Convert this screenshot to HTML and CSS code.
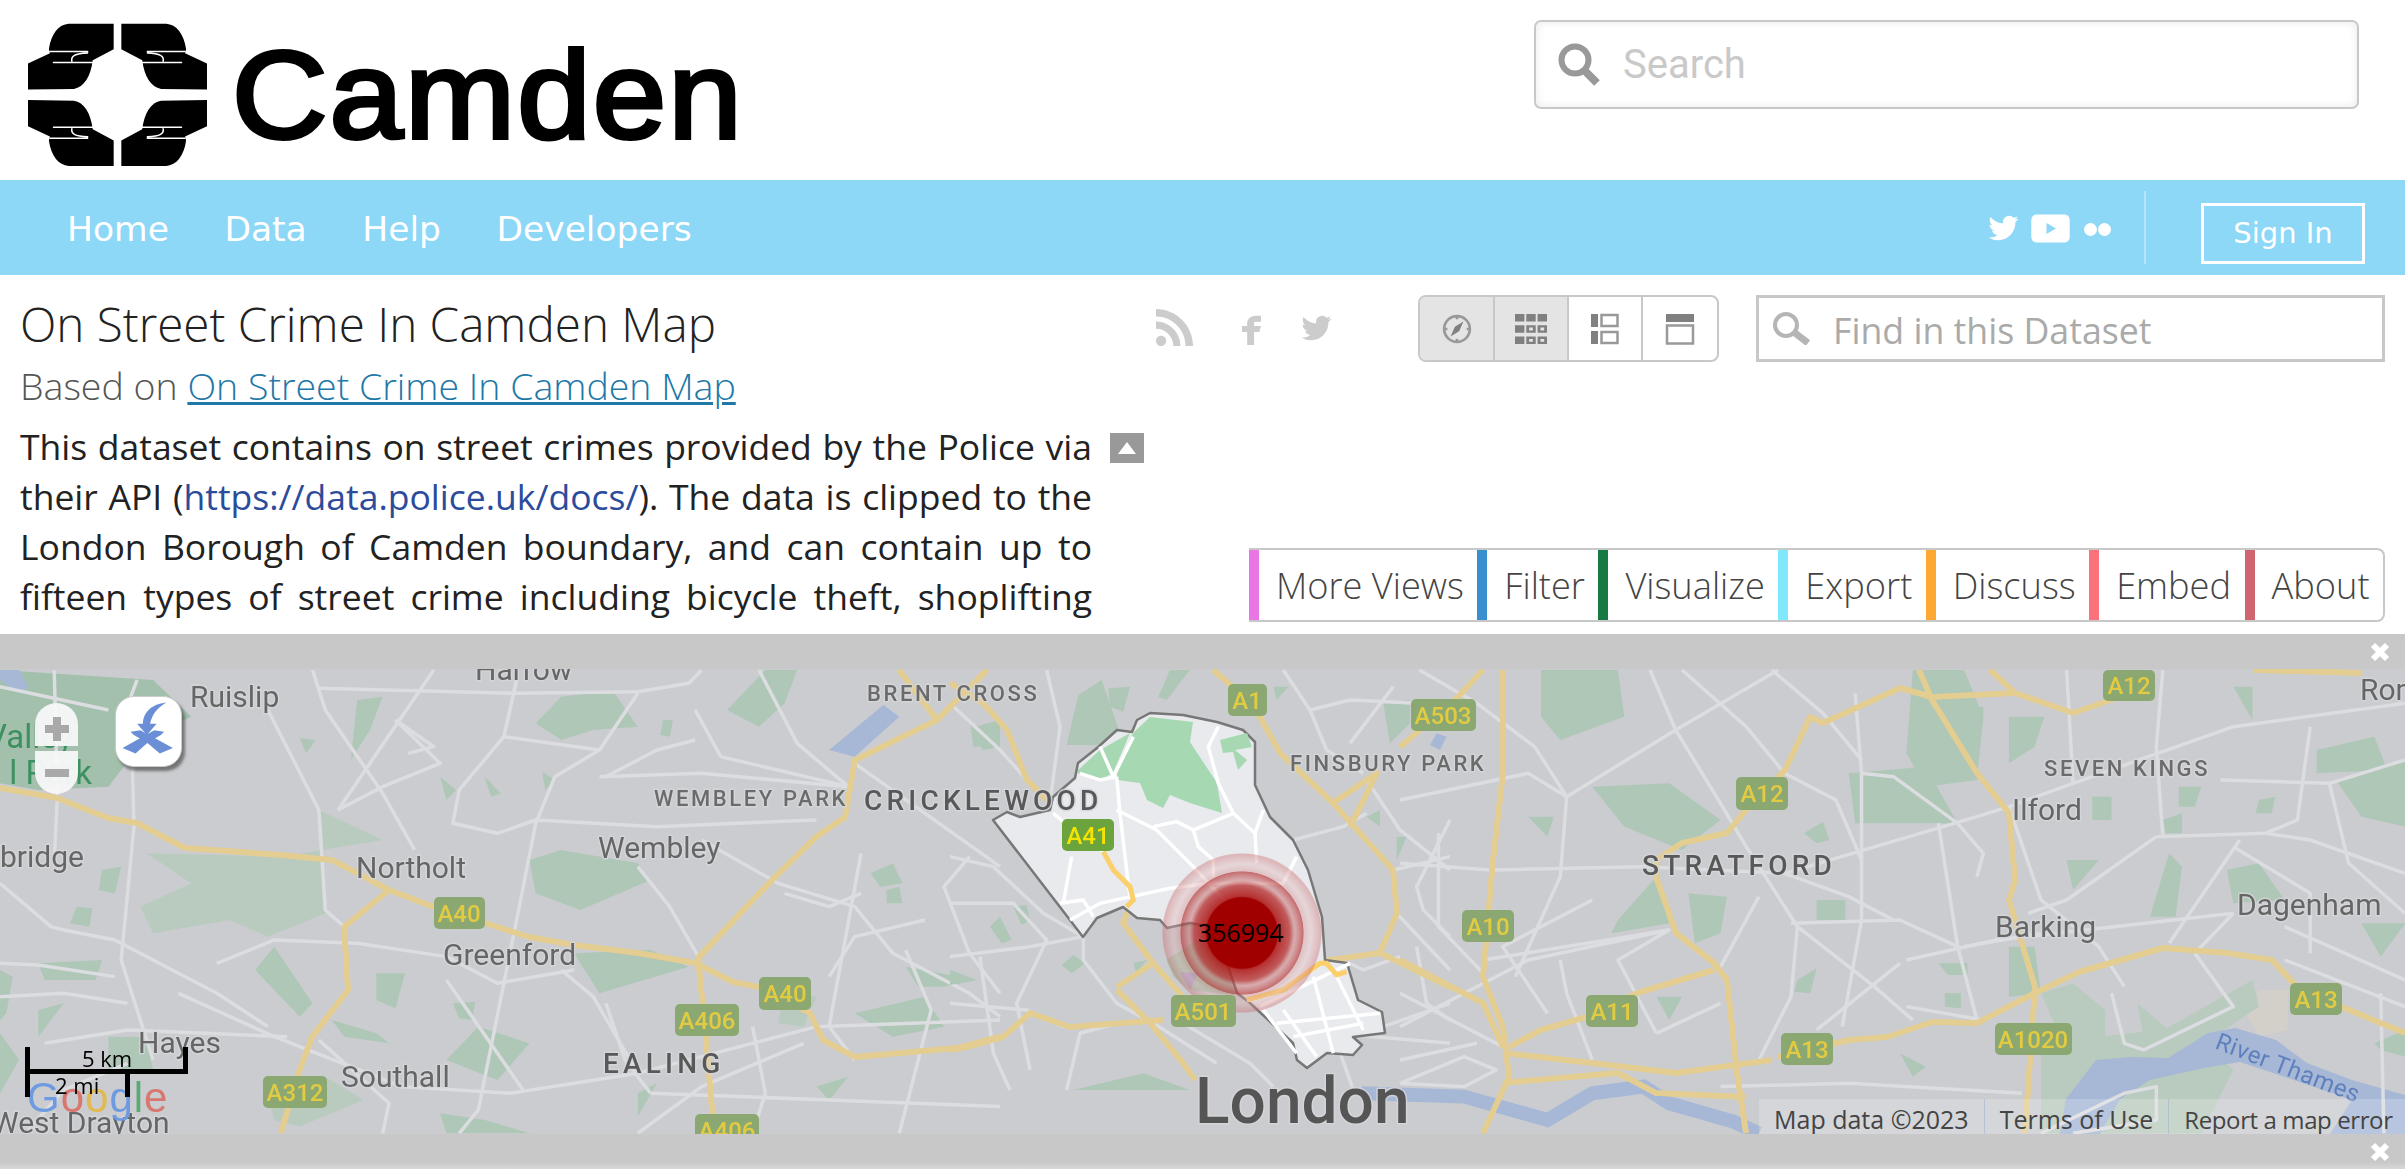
FILE: index.html
```html
<!DOCTYPE html>
<html lang="en">
<head>
<meta charset="utf-8">
<title>On Street Crime In Camden Map</title>
<link rel="stylesheet" href="styles.css">
</head>
<body>
<header class="site-header">
  <a class="logo" href="#">
    <svg class="emblem" viewBox="55 68 351 421" preserveAspectRatio="none" aria-hidden="true">
      <defs>
        <g id="hand">
          <path class="hand-fill" d="M96,145 C100,100 115,72 135,70 L223,70 L223,145 L182,178 C178,225 165,258 145,262 L55,264 L55,187 L98,157 Z"/>
          <path class="hand-line" d="M98,152 H172 M105,184 H183 M141,180 C139,166 146,157 172,156"/>
        </g>
      </defs>
      <use href="#hand"/>
      <use href="#hand" transform="translate(461 0) scale(-1 1)"/>
      <use href="#hand" transform="translate(0 559) scale(1 -1)"/>
      <use href="#hand" transform="translate(461 559) scale(-1 -1)"/>
    </svg>
    <span class="logo-text">Camden</span>
  </a>
  <div class="site-search">
    <svg class="site-search-icon" viewBox="0 0 45 43" aria-hidden="true"><circle cx="18" cy="17" r="13.5"/><path d="M28 28 L40 40"/></svg>
    <span class="site-search-text">Search</span>
  </div>
</header>

<nav class="site-nav">
  <div class="nav-links">
    <a href="#">Home</a><a href="#">Data</a><a href="#">Help</a><a href="#">Developers</a>
  </div>
  <div class="nav-right">
    <svg class="nav-twitter" viewBox="0 0 24 24" aria-hidden="true"><path d="M23.953 4.57a10 10 0 01-2.825.775 4.958 4.958 0 002.163-2.723c-.951.555-2.005.959-3.127 1.184a4.92 4.92 0 00-8.384 4.482C7.69 8.095 4.067 6.13 1.64 3.162a4.822 4.822 0 00-.666 2.475c0 1.71.87 3.213 2.188 4.096a4.904 4.904 0 01-2.228-.616v.06a4.923 4.923 0 003.946 4.827 4.996 4.996 0 01-2.212.085 4.936 4.936 0 004.604 3.417 9.867 9.867 0 01-6.102 2.105c-.39 0-.779-.023-1.17-.067a13.995 13.995 0 007.557 2.209c9.053 0 13.998-7.496 13.998-13.985 0-.21 0-.42-.015-.63A9.935 9.935 0 0024 4.59z"/></svg>
    <svg class="nav-youtube" viewBox="0 0 39 29" aria-hidden="true"><path fill-rule="evenodd" d="M6 0.5 H33 C37 0.5 38.5 3 38.7 6 V23 C38.5 26 37 28.5 33 28.5 H6 C2 28.5 0.5 26 0.3 23 V6 C0.5 3 2 0.5 6 0.5 Z M15.5 9 V20 L25 14.5 Z"/></svg>
    <svg class="nav-flickr" viewBox="0 0 27 13" aria-hidden="true"><circle cx="6.5" cy="6.5" r="6.5"/><circle cx="20.5" cy="6.5" r="6.5"/></svg>
    <span class="nav-divider"></span>
    <a class="sign-in" href="#">Sign In</a>
  </div>
</nav>

<section class="dataset">
  <div class="dataset-info">
    <h1 class="dataset-title">On Street Crime In Camden Map</h1>
    <p class="based-on">Based on <a href="#">On Street Crime In Camden Map</a></p>
    <div class="desc-row">
      <p class="desc">This dataset contains on street crimes provided by the Police via their API (<a href="#">https://data.police.uk/docs/</a>). The data is clipped to the London Borough of Camden boundary, and can contain up to fifteen types of street crime including bicycle theft, shoplifting and other theft, burglary, robbery and vehicle crime.</p>
      <button class="desc-toggle" aria-label="Collapse"><span class="tri"></span></button>
    </div>
  </div>
  <div class="dataset-tools">
    <div class="toolbar">
      <div class="share">
        <svg class="share-rss" viewBox="0 0 24 24" aria-hidden="true"><path d="M19.199 24C19.199 13.467 10.533 4.8 0 4.8V0c13.165 0 24 10.835 24 24h-4.801zM3.291 17.415c1.814 0 3.293 1.479 3.293 3.295 0 1.813-1.485 3.29-3.301 3.29C1.47 24 0 22.526 0 20.71s1.475-3.294 3.291-3.295zM15.909 24h-4.665c0-6.169-5.075-11.245-11.244-11.245V8.09c8.727 0 15.909 7.184 15.909 15.91z"/></svg>
        <svg class="share-fb" viewBox="6 0 11 24" preserveAspectRatio="none" aria-hidden="true"><path d="M14 8h3V4h-3c-2.8 0-5 2.2-5 5v2H6v4h3v9h4v-9h3l1-4h-4V9c0-.6.4-1 1-1z"/></svg>
        <svg class="share-tw" viewBox="0 0 24 24" aria-hidden="true"><path d="M23.953 4.57a10 10 0 01-2.825.775 4.958 4.958 0 002.163-2.723c-.951.555-2.005.959-3.127 1.184a4.92 4.92 0 00-8.384 4.482C7.69 8.095 4.067 6.13 1.64 3.162a4.822 4.822 0 00-.666 2.475c0 1.71.87 3.213 2.188 4.096a4.904 4.904 0 01-2.228-.616v.06a4.923 4.923 0 003.946 4.827 4.996 4.996 0 01-2.212.085 4.936 4.936 0 004.604 3.417 9.867 9.867 0 01-6.102 2.105c-.39 0-.779-.023-1.17-.067a13.995 13.995 0 007.557 2.209c9.053 0 13.998-7.496 13.998-13.985 0-.21 0-.42-.015-.63A9.935 9.935 0 0024 4.59z"/></svg>
      </div>
      <div class="view-group">
        <span class="view-btn active">
          <svg viewBox="0 0 28 28" aria-hidden="true"><circle class="vi-line" cx="14" cy="14" r="12"/><path class="vi-fill" d="M20 7 L16 16 L12 12 Z M8 21 L12 12 L16 16 Z"/><path class="vi-line" d="M14 1 V5 M14 23 V27 M1 14 H5 M23 14 H27"/></svg>
        </span>
        <span class="view-btn active">
          <svg class="vi-wide" viewBox="0 0 34 34" aria-hidden="true"><path class="vi-fill" d="M0 1h10v8H0zM12 1h10v8H12zM24 1h10v8H24zM0 13h10v8H0zM0 25h10v8H0z"/><path class="vi-fill" fill-rule="evenodd" d="M12 13h10v8H12zM15 15.5v3h4v-3zM24 13h10v8H24zM27 15.500v3h4v-3zM12 25h10v8H12zM15 27.500v3h4v-3zM24 25h10v8H24zM27 27.500v3h4v-3z"/></svg>
        </span>
        <span class="view-btn">
          <svg viewBox="0 0 28 32" aria-hidden="true"><path class="vi-fill" d="M0 1h7v13H0zM0 18h7v13H0z"/><path class="vi-box" d="M10.500 2h16v11h-16zM10.500 19h16v11h-16z"/></svg>
        </span>
        <span class="view-btn">
          <svg viewBox="0 0 28 32" aria-hidden="true"><path class="vi-fill" d="M0 1h28v8H0z"/><path class="vi-box" d="M1 12.500h26v18H1z"/></svg>
        </span>
      </div>
      <div class="find">
        <svg class="find-icon" viewBox="0 0 41 33" preserveAspectRatio="none" aria-hidden="true"><circle cx="15" cy="13" r="11"/><path d="M24 21 L37 31"/></svg>
        <span class="find-text">Find in this Dataset</span>
      </div>
    </div>
    <div class="tabs">
      <a class="tab t-views" href="#">More Views</a>
      <a class="tab t-filter" href="#">Filter</a>
      <a class="tab t-vis" href="#">Visualize</a>
      <a class="tab t-export" href="#">Export</a>
      <a class="tab t-discuss" href="#">Discuss</a>
      <a class="tab t-embed" href="#">Embed</a>
      <a class="tab t-about" href="#">About</a>
    </div>
  </div>
</section>

<div class="band">
  <svg class="close" viewBox="0 0 20 20" aria-hidden="true"><path d="M3 3 L17 17 M17 3 L3 17"/></svg>
</div>

<main class="map">
  <svg class="map-canvas" viewBox="0 669 2405 465" aria-label="Map of London">
    <defs>
      <radialGradient id="cluster">
        <stop offset="0" stop-color="#a00000"/>
        <stop offset=".44" stop-color="#a00000"/>
        <stop offset=".46" stop-color="#b01c1c" stop-opacity=".9"/>
        <stop offset=".59" stop-color="#b53030" stop-opacity=".78"/>
        <stop offset=".6" stop-color="#b52a2a" stop-opacity=".72"/>
        <stop offset=".66" stop-color="#c26060" stop-opacity=".45"/>
        <stop offset=".765" stop-color="#b83c3c" stop-opacity=".72"/>
        <stop offset=".775" stop-color="#d08080" stop-opacity=".38"/>
        <stop offset=".86" stop-color="#e0b0b0" stop-opacity=".35"/>
        <stop offset=".985" stop-color="#c96a6a" stop-opacity=".42"/>
        <stop offset="1" stop-color="#c96a6a" stop-opacity=".1"/>
      </radialGradient>
    </defs>

    <!-- west -->
    <g transform="translate(0 660) scale(.6378 .3333)">
      <g class="green-x">
        <polygon points="0,30 240,60 300,170 230,230 170,380 60,390 0,370"/>
      </g>
      <g class="green-d">
        <polygon points="1140,150 1200,30 1250,30 1230,130 1190,200"/>
        <polygon points="880,110 960,90 1000,200 930,210 880,240 840,190"/>
        <polygon points="830,600 880,570 1000,610 1020,660 910,750 840,700"/>
        <polygon points="900,880 1020,870 1080,920 940,1000"/>
        <polygon points="400,930 430,860 490,1030 470,1070"/>
        <polygon points="590,940 635,940 620,1045 590,1020"/>
        <polygon points="520,1080 590,1120 610,1150 540,1130"/>
        <polygon points="750,1100 830,1150 780,1260 700,1200"/>
        <polygon points="1340,1060 1450,1010 1480,1100 1400,1130"/>
        <polygon points="1420,920 1530,960 1480,980 1440,980"/>
        <polygon points="1365,640 1400,610 1415,670 1380,680"/>
        <polygon points="1390,690 1410,680 1415,730 1390,730"/>
        <polygon points="1040,180 1055,180 1050,230 1035,225"/>
        <polygon points="470,235 495,240 480,280"/>
        <polygon points="560,120 600,110 580,210 550,300"/>
        <polygon points="850,335 870,360 855,390"/>
        <polygon points="120,740 145,745 140,800 110,790"/>
        <polygon points="60,910 160,900 150,960 70,960"/>
        <polygon points="0,930 20,950 10,1060 0,1080"/>
        <polygon points="0,1120 30,1200 0,1300"/>
        <polygon points="170,1130 230,1130 240,1230 170,1230"/>
        <polygon points="1000,1300 1030,1270 1000,1370"/>
        <polygon points="1280,1280 1330,1250 1300,1320"/>
        <polygon points="690,1360 760,1380 830,1420 700,1420"/>
        <polygon points="60,1050 100,1030 60,1130"/>
        <polygon points="1530,200 1568,180 1568,260 1540,270"/>
        <polygon points="160,630 190,620 180,700 155,690"/>
        <polygon points="710,1030 745,1025 740,1080 720,1075"/>
        <polygon points="690,350 715,390 700,420"/>
        <polygon points="760,350 785,400 770,410"/>
      </g>
      <g class="green-l">
        <polygon points="230,580 440,590 600,540 500,450 510,760 420,830 360,780 240,820 220,740 300,670"/>
        <polygon points="420,1290 510,1250 570,1320 470,1400 430,1380"/>
        <polygon points="1230,1000 1280,1010 1260,1100 1220,1090"/>
      </g>
      <polygon class="water" points="1300,270 1385,135 1410,170 1340,290"/>
      <polygon class="water" points="0,30 30,30 45,85 25,95 0,60"/>
      <g class="road">
        <polyline points="0,80 170,150"/>
        <polyline points="85,30 90,410 85,600"/>
        <polyline points="215,60 205,110 210,500 190,900 240,1200"/>
        <polyline points="490,30 510,150 600,400 650,570"/>
        <polyline points="500,85 810,100 1000,95 1080,70 1100,30"/>
        <polyline points="420,150 500,450 510,750 540,800"/>
        <polyline points="680,30 530,450"/>
        <polyline points="810,60 790,230 720,390 710,490 780,520 840,480 1030,500 1280,480"/>
        <polyline points="790,230 940,270 870,350 840,490 810,780 750,1350 720,1420"/>
        <polyline points="940,350 1100,340 1330,380"/>
        <polyline points="1190,30 1250,250 1330,380"/>
        <polyline points="280,1000 430,1130 630,1280 800,1300 1000,1240 1280,1100 1568,1080"/>
        <polyline points="100,810 180,840 340,1000 420,1100"/>
        <polyline points="340,910 430,840 560,850 700,890 780,970 900,930"/>
        <polyline points="0,910 60,915 180,950"/>
        <polyline points="1100,540 1220,670 1340,740 1400,880 1520,1000 1568,1070"/>
        <polyline points="1350,580 1300,1100 1340,1200"/>
        <polyline points="700,960 820,1290"/>
        <polyline points="1000,620 1050,740 1095,890"/>
        <polyline points="1020,1300 1300,1320 1568,1340"/>
        <polyline points="70,1150 200,1110 450,1130"/>
        <polyline points="620,180 690,310 600,380 530,450"/>
        <polyline points="1410,1420 1460,1050 1420,870"/>
        <polyline points="1520,590 1480,680 1520,880 1568,1000"/>
        <polyline points="1340,310 1568,620"/>
        <polyline points="600,1420 610,1330 500,1140"/>
        <polyline points="0,670 80,800 100,810"/>
        <polyline points="940,270 1000,100"/>
        <polyline points="1090,150 1130,290 1330,380"/>
        <polyline points="1090,240 1030,270 950,350"/>
        <polyline points="640,280 680,260 620,180"/>
        <polyline points="950,1030 980,1200 1020,1300"/>
        <polyline points="880,930 930,1010 1000,1240"/>
        <polyline points="1180,1100 1200,1300 1180,1420"/>
        <polyline points="1260,1150 1100,1280 1000,1420"/>
        <polyline points="1350,700 1300,740 1230,700"/>
        <polyline points="1450,780 1340,830 1300,950"/>
        <polyline points="0,1010 100,1000 200,1030"/>
        <polyline points="40,1420 100,1290 200,1210"/>
      </g>
    </g>

    <!-- east -->
    <g transform="translate(1400 660) scale(.641 .3333)">
      <polygon class="beige" points="1320,1060 1340,990 1385,990 1385,1110 1340,1130"/>
      <g class="green-d">
        <polygon points="220,30 340,30 350,170 250,240 220,170"/>
        <polygon points="300,380 420,370 500,480 440,570 350,500"/>
        <polygon points="700,340 820,320 870,490 780,490 710,490"/>
        <polygon points="800,30 880,30 910,170 900,360 820,380 790,280"/>
        <polygon points="950,170 1005,170 990,260 950,310"/>
        <polygon points="340,780 400,650 420,790 330,820"/>
        <polygon points="450,700 510,710 500,820 460,850"/>
        <polygon points="1460,360 1568,300 1568,500 1500,470"/>
        <polygon points="1290,630 1340,610 1380,720 1300,730"/>
        <polygon points="1170,770 1200,580 1220,620 1210,770"/>
        <polygon points="950,860 990,860 1000,1000 950,1010"/>
        <polygon points="650,720 695,720 695,780 650,780"/>
        <polygon points="1040,600 1090,600 1050,690"/>
        <polygon points="1520,1150 1568,1110 1568,1190 1530,1170"/>
        <polygon points="1500,790 1568,790 1530,890"/>
        <polygon points="780,1180 820,1220 800,1250"/>
        <polygon points="1430,270 1520,230 1540,330 1430,340"/>
        <polygon points="1300,80 1330,80 1330,180"/>
        <polygon points="880,150 910,140 910,170 880,170"/>
        <polygon points="630,520 660,485 670,540 650,550"/>
        <polygon points="200,470 240,470 230,530"/>
        <polygon points="1080,410 1110,410 1110,480 1080,480"/>
        <polygon points="1215,380 1250,380 1240,440 1215,440"/>
        <polygon points="1340,420 1365,410 1360,460 1335,460"/>
        <polygon points="1190,480 1220,460 1220,520 1195,520"/>
        <polygon points="850,1000 875,1000 875,1045 850,1040"/>
        <polygon points="840,910 885,910 885,945 855,945"/>
        <polygon points="620,960 650,925 640,1000 615,995"/>
        <polygon points="400,1010 440,1010 420,1080"/>
      </g>
      <g class="green-l">
        <polygon points="1000,1000 1050,970 1100,1050 1100,1160 1030,1130"/>
        <polygon points="1150,1030 1200,1110 1160,1130"/>
        <polygon points="1200,1100 1330,960 1340,1040 1240,1170 1170,1170"/>
        <polygon points="1000,1150 1230,1100 1300,1230 1250,1420 1000,1420"/>
      </g>
      <path class="river" d="M-60,1300 L100,1310 L230,1380 L300,1300 L380,1280 L420,1330 L520,1385 L560,1420"/>
    </g>
    <polygon class="water" points="2066,1099 2096,1060 2132,1057 2168,1058 2208,1033 2235,1028 2276,1040 2307,1063 2352,1080 2405,1095 2405,1134 2330,1134 2352,1100 2285,1077 2240,1062 2204,1068 2150,1080 2120,1099 2100,1134 2060,1134"/>
    <g transform="translate(1400 660) scale(.641 .3333)">
      <g class="road">
        <polyline points="390,30 430,210 500,430 540,560 620,800 740,980 800,1080"/>
        <polyline points="0,420 200,340 260,410 430,210 590,30"/>
        <polyline points="260,410 250,650 180,950"/>
        <polyline points="0,610 140,630 380,620"/>
        <polyline points="380,620 600,640 900,470 950,440"/>
        <polyline points="560,710 500,920"/>
        <polyline points="1568,130 1300,200 1050,370 950,440"/>
        <polyline points="1280,360 1450,370 1568,300"/>
        <polyline points="1180,530 1350,520 1400,480 1420,200"/>
        <polyline points="1180,530 1040,720 980,760"/>
        <polyline points="1310,540 1200,850"/>
        <polyline points="790,900 930,840 1300,760"/>
        <polyline points="610,790 780,780 870,860 900,1080"/>
        <polyline points="780,910 650,1110"/>
        <polyline points="910,1080 790,1040"/>
        <polyline points="0,1100 200,900 420,810"/>
        <polyline points="0,1200 120,1150"/>
        <polyline points="1380,900 1568,1040"/>
        <polyline points="1110,1000 1130,1150 1160,1170 1300,1040 1240,880"/>
        <polyline points="710,100 720,340 720,780 690,1100"/>
        <polyline points="720,340 770,350 870,490 910,580 900,650"/>
        <polyline points="840,490 870,860"/>
        <polyline points="500,1280 700,1270 970,1300"/>
        <polyline points="1300,560 1420,700 1420,880"/>
        <polyline points="0,1000 160,1160"/>
        <polyline points="1530,1000 1535,1420"/>
        <polyline points="250,900 260,1000 300,1200"/>
        <polyline points="130,900 420,810 340,900 400,1120"/>
        <polyline points="400,1120 500,1030"/>
        <polyline points="0,1270 100,1190 150,1230 100,1280 0,1270"/>
        <polyline points="1000,1420 1130,1300 1180,1280 1180,1380 1050,1420"/>
        <polyline points="580,30 660,160 720,300"/>
        <polyline points="30,30 120,130 210,260 260,410"/>
        <polyline points="1190,30 1180,260 1190,530"/>
        <polyline points="1040,30 1050,370"/>
        <polyline points="950,440 1000,720 1090,860 1130,980"/>
        <polyline points="1000,820 880,860"/>
        <polyline points="600,640 700,710 770,780"/>
        <polyline points="60,520 60,800 130,940"/>
        <polyline points="300,720 160,860 230,1060"/>
        <polyline points="620,800 610,1010 560,1200"/>
        <polyline points="1450,370 1480,610 1568,760"/>
        <polyline points="1300,760 1240,880"/>
        <polyline points="440,30 540,200 600,340 680,420 720,600"/>
        <polyline points="1568,640 1420,540 1350,520"/>
        <polyline points="1380,800 1568,960"/>
      </g>
    </g>

    <!-- middle -->
    <g transform="translate(950 670) scale(.3333)">
      <g class="green-d">
        <polygon points="385,75 455,30 510,190 440,225 350,225"/>
        <polygon points="475,55 540,50 520,125 480,110"/>
        <polygon points="625,80 660,0 720,0 650,90"/>
        <polygon points="60,155 90,190 150,170 100,230 70,230"/>
        <polygon points="120,770 150,740 185,810 155,820"/>
        <polygon points="190,710 230,705 240,750 215,765"/>
        <polygon points="335,885 370,855 405,880 365,910"/>
        <polygon points="1300,100 1380,90 1380,160 1320,220"/>
        <polygon points="1250,440 1290,420 1290,470"/>
        <polygon points="1340,500 1370,500 1340,570"/>
        <polygon points="970,50 1015,50 980,90"/>
        <polygon points="640,740 680,690 740,720 740,770 660,770"/>
        <polygon points="650,870 740,810 830,880 855,975 720,960 670,920"/>
        <polygon points="0,900 80,930 0,945"/>
        <polygon points="550,880 590,870 560,910"/>
        <polygon points="370,1260 580,1210 720,1260"/>
      </g>
      <polygon class="purple" points="690,905 745,910 720,960"/>
      <polygon class="water" points="1440,225 1460,190 1490,200 1470,240"/>
      <g class="road">
        <polyline points="290,0 330,170 300,400"/>
        <polyline points="0,560 130,590 280,730 400,800 400,870 500,1000 610,1060 800,1180"/>
        <polyline points="0,860 240,830 400,800"/>
        <polyline points="1000,0 1080,120 1130,240 1240,310"/>
        <polyline points="1080,120 1200,90 1400,100"/>
        <polyline points="1250,330 1350,480 1500,600"/>
        <polyline points="1500,450 1400,650 1420,720 1500,800"/>
        <polyline points="0,1000 230,1020 340,1070"/>
        <polyline points="90,860 130,1150 180,1260"/>
        <polyline points="1030,510 1180,470 1250,430"/>
        <polyline points="1330,600 1500,560"/>
        <polyline points="1340,730 1500,900"/>
        <polyline points="1400,830 1430,1000 1500,1050"/>
        <polyline points="1300,1070 1500,1000"/>
        <polyline points="1200,220 1330,50"/>
        <polyline points="700,1060 900,1180 970,1250"/>
        <polyline points="0,100 150,240 240,340"/>
        <polyline points="1150,1090 1500,1120"/>
        <polyline points="350,1260 390,1090 500,1060"/>
        <polyline points="1150,1090 1210,1260"/>
        <polyline points="0,700 190,700 290,810 200,1000 240,1200"/>
        <polyline points="1180,870 1240,900 1350,860"/>
      </g>
    </g>

    <!-- A roads, in page coordinates -->
    <g id="a-roads" class="a-roads">
      <polyline points="0,788 57,798 108,818 137,823 185,848 281,855 332,860 357,873 389,890 434,907 485,923 529,937 574,945 638,953 695,963 733,982 759,987 810,1013 823,1040 855,1057 957,1048 1000,1037"/>
      <polyline points="389,890 344,927 348,990 312,1037 297,1077 281,1133"/>
      <polyline points="987,670 937,720 855,760 845,817 816,837 772,880 698,958 705,1027 714,1133"/>
      <polyline points="899,670 937,720"/>
      <polyline points="950,683 983,703 1007,730 1027,780 1057,810"/>
      <polyline points="1213,670 1233,687 1260,717 1280,753 1333,803 1393,870 1397,913 1380,953 1330,960 1310,965"/>
      <polyline points="1333,803 1377,773 1350,827"/>
      <polyline points="1380,953 1450,987"/>
      <polyline points="1117,987 1153,963"/>
      <polyline points="1117,990 1150,1023 1183,1063 1195,1080"/>
      <polyline points="950,1050 967,1047 1003,1037 1030,1013 1070,1027 1163,1020"/>
      <polyline points="1103,850 1130,883 1132,903 1123,923 1153,963 1183,997"/>
      <polyline points="1503,670 1503,773 1493,860 1483,977 1503,1027 1509,1077 1483,1133"/>
      <polyline points="1483,670 1458,697 1400,747"/>
      <polyline points="1990,670 2015,693 1932,697 1900,688 1823,723 1810,717 1785,770 1746,810 1727,833 1682,843 1656,860 1656,877 1676,933 1714,963 1727,980 1737,1073 1746,1133"/>
      <polyline points="2015,693 2073,713 2131,693"/>
      <polyline points="1919,670 1932,700 1977,773 2009,813 2015,880 2009,900 2035,987 2025,1133"/>
      <polyline points="1778,1057 1849,1040 1887,1037 1932,1022 1977,1023 2035,993 2079,972 2163,948 2227,953 2272,960 2297,987 2342,1007 2405,1033"/>
      <polyline points="1503,1053 1592,1063 1676,1073 1772,1060"/>
      <polyline points="1503,1083 1618,1073 1656,1093 1746,1097"/>
      <polyline points="1509,1047 1541,1030 1586,1017 1637,993 1714,970"/>
      <polyline points="1400,960 1448,985 1483,1003 1503,1047"/>
      <polyline points="2253,670 2362,673"/>
    </g>
    <use href="#a-roads" class="a-roads-core"/>

    <!-- the borough of Camden, lit up -->
    <polygon class="borough" points="993,820 1083,937 1097,918 1123,907 1137,918 1160,920 1167,928 1190,923 1213,927 1227,963 1237,993 1250,1003 1293,1043 1297,1060 1307,1068 1327,1053 1353,1055 1362,1045 1353,1037 1385,1033 1382,1012 1358,1000 1347,963 1325,960 1322,917 1308,870 1293,840 1270,817 1255,785 1255,742 1243,730 1217,722 1183,715 1150,713 1137,720 1132,732 1117,730 1097,748 1078,763 1075,778 1053,797 1050,810 1020,817 1007,812"/>
    <g class="heath">
      <polygon points="1150,717 1193,722 1190,742 1217,783 1222,813 1190,803 1170,795 1163,808 1147,800 1140,783 1117,780 1117,770 1133,733"/>
      <polygon points="1078,770 1100,750 1130,733 1113,773 1100,780 1078,773"/>
      <polygon points="1220,740 1247,733 1252,747 1235,750 1247,760 1238,770 1233,752 1223,753"/>
    </g>
    <g transform="translate(950 670) scale(.3333)">
      <g class="road-w">
        <polyline points="500,320 510,430 530,600 540,680"/>
        <polyline points="450,230 490,320 550,200"/>
        <polyline points="500,420 620,480 730,590 850,720 930,800"/>
        <polyline points="610,470 680,455 730,480 850,430 805,340 775,230 805,170"/>
        <polyline points="850,430 915,490 920,580"/>
        <polyline points="915,490 940,420"/>
        <polyline points="730,480 745,530 790,570 790,620"/>
        <polyline points="340,700 365,560"/>
        <polyline points="330,700 400,690 430,740"/>
        <polyline points="360,750 450,700 660,655 780,640 1000,640 1040,560"/>
        <polyline points="310,430 370,480 460,545"/>
        <polyline points="390,310 450,330 500,320"/>
        <polyline points="930,1010 1200,880"/>
        <polyline points="980,1060 1290,1030"/>
        <polyline points="1030,1100 1240,1060"/>
        <polyline points="940,1020 1040,1150"/>
        <polyline points="1000,1020 1100,1160"/>
        <polyline points="1090,920 1150,1150"/>
        <polyline points="1150,900 1240,1080"/>
      </g>
      <polyline class="road-y" points="460,545 490,600 540,650 550,690 530,710"/>
      <polyline class="road-y" points="890,990 1000,960 1110,880 1130,880 1160,915 1190,905"/>
    </g>

    <circle class="cluster" cx="1242" cy="933" r="80"/>

    <g class="shield">
      <rect x="434" y="897" width="51" height="32" rx="5"/><text x="459" y="922">A40</text>
      <rect x="759" y="977" width="52" height="33" rx="5"/><text x="785" y="1002">A40</text>
      <rect x="675" y="1004" width="64" height="32" rx="5"/><text x="707" y="1029">A406</text>
      <rect x="695" y="1114" width="64" height="32" rx="5"/><text x="727" y="1139">A406</text>
      <rect x="263" y="1076" width="64" height="32" rx="5"/><text x="295" y="1101">A312</text>
      <rect x="1228" y="684" width="39" height="32" rx="5"/><text x="1247" y="709">A1</text>
      <rect x="1171" y="995" width="65" height="32" rx="5"/><text x="1203" y="1020">A501</text>
      <rect x="1411" y="699" width="65" height="32" rx="5"/><text x="1443" y="724">A503</text>
      <rect x="2103" y="670" width="52" height="31" rx="5"/><text x="2129" y="694">A12</text>
      <rect x="1736" y="777" width="52" height="33" rx="5"/><text x="1762" y="802">A12</text>
      <rect x="1462" y="910" width="52" height="32" rx="5"/><text x="1488" y="935">A10</text>
      <rect x="1586" y="995" width="52" height="32" rx="5"/><text x="1612" y="1020">A11</text>
      <rect x="1781" y="1033" width="52" height="32" rx="5"/><text x="1807" y="1058">A13</text>
      <rect x="1995" y="1023" width="77" height="32" rx="5"/><text x="2033" y="1048">A1020</text>
      <rect x="2290" y="983" width="52" height="32" rx="5"/><text x="2316" y="1008">A13</text>
    </g>
    <g class="shield shield-lit">
      <rect x="1062" y="819" width="52" height="32" rx="5"/><text x="1088" y="844">A41</text>
    </g>

    <g class="place">
      <text x="475" y="680">Harrow</text>
      <text x="190" y="707">Ruislip</text>
      <text x="598" y="858">Wembley</text>
      <text x="356" y="878">Northolt</text>
      <text x="443" y="965">Greenford</text>
      <text x="0" y="867">bridge</text>
      <text x="138" y="1053">Hayes</text>
      <text x="341" y="1087">Southall</text>
      <text x="-8" y="1133">West Drayton</text>
      <text x="2012" y="820">Ilford</text>
      <text x="2237" y="915">Dagenham</text>
      <text x="1995" y="937">Barking</text>
      <text x="2360" y="700">Romford</text>
    </g>
    <g class="area">
      <text x="867" y="701">BRENT CROSS</text>
      <text x="654" y="806">WEMBLEY PARK</text>
      <text x="1290" y="771">FINSBURY PARK</text>
      <text x="2044" y="776">SEVEN KINGS</text>
    </g>
    <g class="district">
      <text x="864" y="810">CRICKLEWOOD</text>
      <text x="603" y="1073">EALING</text>
      <text x="1642" y="875">STRATFORD</text>
    </g>
    <text class="london" x="1195" y="1123">London</text>
    <text class="river-name" transform="translate(2214 1048) rotate(21)">River Thames</text>
    <text class="park" x="-14" y="748">Valley</text>
    <text class="park park-end" x="92" y="784">l Park</text>

    <text class="google" x="27" y="1112"><tspan class="g-b">G</tspan><tspan class="g-r">o</tspan><tspan class="g-y">o</tspan><tspan class="g-b">g</tspan><tspan class="g-g">l</tspan><tspan class="g-r">e</tspan></text>

    <path class="scale-line" d="M27.500 1047 V1097 M25 1071.500 H188 M185.500 1047 V1074 M127.500 1072 V1097"/>
    <text class="scale-text" x="82" y="1067">5 km</text>
    <text class="scale-text" x="55" y="1094">2 mi</text>

    <text class="cluster-count" x="1241" y="942">356994</text>
  </svg>

  <div class="zoom-ctl">
    <span class="zoom-btn zoom-in"><span class="zoom-plus"></span></span>
    <span class="zoom-btn"><span class="zoom-minus"></span></span>
  </div>
  <div class="map-tool">
    <svg viewBox="345 228 200 212" aria-hidden="true">
      <path d="M500,245 C450,250 428,280 428,310 L410,310 L440,345 L470,310 L450,310 C455,285 470,262 500,245 Z"/>
      <path d="M390,335 L420,330 L520,385 L480,402 L440,368 L400,345 Z"/>
      <path d="M493,335 L463,330 L365,385 L405,402 L443,368 L483,345 Z"/>
    </svg>
  </div>
  <div class="attribution">
    <span>Map data ©2023</span><span class="attr-sep"></span><span>Terms of Use</span><span class="attr-sep"></span><span class="attr-report">Report a map error</span>
  </div>
</main>

<div class="band band-bottom">
  <svg class="close" viewBox="0 0 20 20" aria-hidden="true"><path d="M3 3 L17 17 M17 3 L3 17"/></svg>
</div>
</body>
</html>
```
FILE: styles.css
```css
html, body { margin: 0; padding: 0; background: #fff; }
body { width: 2405px; height: 1173px; overflow: hidden; font-family: "Open Sans", sans-serif; }
a { text-decoration: none; color: inherit; }
h1, p { margin: 0; }

/* header */
.site-header { height: 180px; display: flex; justify-content: space-between; align-items: flex-start; padding: 0 46px 0 28px; box-sizing: border-box; }
.logo { display: flex; align-items: center; margin-top: 23px; height: 143px; color: #000; }
.emblem { width: 179px; height: 143px; display: block; }
.hand-fill { fill: #000; }
.hand-line { fill: none; stroke: #fff; stroke-width: 1.500px; stroke-linecap: round; vector-effect: non-scaling-stroke; }
.logo-text { font-family: "Liberation Sans", Arial, sans-serif; font-weight: 400; font-size: 124px; line-height: 1; letter-spacing: 2px; -webkit-text-stroke: 4px #000; margin-left: 25px; transform: scaleX(1.065); transform-origin: left center; }
.site-search { width: 825px; height: 89px; margin-top: 20px; box-sizing: border-box; border: 2px solid #c8c8c8; border-radius: 7px; box-shadow: inset 0 0 10px rgba(0,0,0,.09); display: flex; align-items: center; padding-left: 21px; }
.site-search-icon { width: 45px; height: 43px; fill: none; stroke: #999; stroke-width: 6; flex: none; }
.site-search-icon path { stroke-width: 8; }
.site-search-text { font-family: Roboto, sans-serif; font-size: 40px; color: #c9c9c9; margin-left: 21px; }

/* nav */
.site-nav { height: 95px; background: #8dd7f7; display: flex; justify-content: space-between; align-items: center; padding: 0 40px 0 67px; box-sizing: border-box; font-family: "DejaVu Sans", sans-serif; color: #fff; }
.nav-links { display: flex; gap: 55.500px; font-size: 34.500px; margin-top: 3px; }
.nav-right { display: flex; align-items: center; }
.nav-twitter { width: 35px; height: 30px; fill: #fff; margin-right: 10px; }
.nav-youtube { width: 39px; height: 29px; fill: #fff; margin-right: 14px; margin-top: 2px; }
.nav-flickr { width: 27px; height: 13px; fill: #fff; margin-top: 4px; }
.nav-divider { width: 2px; height: 73px; background: rgba(255,255,255,.35); margin: 0 55px 0 33px; }
.sign-in { width: 164px; height: 61px; margin-top: 11px; box-sizing: border-box; border: 3px solid #fff; display: flex; align-items: center; justify-content: center; font-size: 29px; }

/* dataset heading */
.dataset { height: 359px; display: flex; overflow: hidden; }
.dataset-info { flex: 0 0 1156px; box-sizing: border-box; padding: 19px 0 0 20px; }
.dataset-title { font-weight: 300; font-size: 47.600px; line-height: 60px; color: #222; }
.based-on { font-weight: 300; font-size: 37.500px; line-height: 48px; color: #555; margin-top: 8px; }
.based-on a { color: #1e78a8; text-decoration: underline; }
.desc-row { display: flex; align-items: flex-start; margin-top: 11px; }
.desc { width: 1072px; height: 200px; overflow: hidden; font-size: 35.500px; line-height: 50px; color: #222; text-align: justify; flex: none; }
.desc a { color: #2b4b9b; }
.desc-toggle { width: 34px; height: 30px; margin: 12px 0 0 18px; padding: 0; border: 0; background: #999; display: flex; align-items: center; justify-content: center; flex: none; }
.tri { width: 0; height: 0; border-left: 9px solid transparent; border-right: 9px solid transparent; border-bottom: 12px solid #fff; }

.dataset-tools { flex: 1; display: flex; flex-direction: column; justify-content: space-between; box-sizing: border-box; padding: 20px 20px 12px 0; }
.toolbar { display: flex; align-items: flex-start; }
.share { width: 179px; margin-right: 83px; height: 65px; display: flex; align-items: center; filter: blur(.7px); fill: #ccc; }
.share-rss { width: 37px; height: 37px; margin-right: 49px; }
.share-fb { width: 19px; height: 35px; margin-right: 37px; }
.share-tw { width: 37px; height: 30px; }
.view-group { width: 301px; height: 67px; box-sizing: border-box; border: 2px solid #c8c8c8; border-radius: 8px; display: flex; overflow: hidden; margin-right: 37px; }
.view-btn { width: 74px; display: flex; align-items: center; justify-content: center; border-left: 2px solid #c8c8c8; box-sizing: border-box; }
.view-btn:first-child { border-left: 0; width: 73px; }
.view-btn:last-child { flex: 1; }
.view-btn.active { background: #e4e4e4; }
.view-btn svg { width: 30px; height: 32px; filter: blur(.3px); }
.view-btn .vi-wide { width: 34px; }
.vi-fill { fill: #808080; }
.vi-line { fill: none; stroke: #999; stroke-width: 2.5; }
.vi-box { fill: none; stroke: #999; stroke-width: 2.5; }
.find { flex: 1; height: 67px; box-sizing: border-box; border: 3px solid #c8c8c8; display: flex; align-items: center; padding-left: 12px; }
.find-icon { width: 41px; height: 33px; fill: none; stroke: #b5b5b5; stroke-width: 4; filter: blur(.4px); }
.find-icon path { stroke-width: 7; }
.find-text { font-size: 35.700px; color: #aaa; margin-left: 21px; position: relative; top: 1px; }
.tabs { align-self: flex-end; height: 74px; box-sizing: border-box; border: 2px solid #c8c8c8; border-left: 0; border-radius: 0 8px 8px 0; display: flex; }
.tab { display: flex; align-items: center; padding: 0 13.500px 0 17px; border-left: 10px solid; font-weight: 300; font-size: 36.200px; color: #444; }
.t-views { border-left-color: #ea76e6; }
.t-filter { border-left-color: #3a8fce; }
.t-vis { border-left-color: #177a42; }
.t-export { border-left-color: #7fe8fd; }
.t-discuss { border-left-color: #fca833; }
.t-embed { border-left-color: #fb717c; }
.t-about { border-left-color: #d0646f; }

/* bands above and below the map */
.band { height: 35px; background: #c8c8c8; display: flex; justify-content: flex-end; align-items: center; padding-right: 15px; box-sizing: border-box; }
.band-bottom { background: linear-gradient(#c8c8c8 80%, #d8d8d8); }
.close { width: 20px; height: 20px; fill: none; stroke: #fff; stroke-width: 6; filter: blur(.4px); }

/* map */
.map { position: relative; height: 465px; overflow: hidden; background: #cbccd0; font-family: Roboto, sans-serif; }
.map-canvas { display: block; width: 2405px; height: 465px; filter: blur(.6px); }
.green-x polygon { fill: #a2c0ac; }
.green-d polygon { fill: #aec7b6; }
.green-l polygon { fill: #b9cbbe; }
.water { fill: #a6b8d6; }
.river { fill: none; stroke: #a6b8d6; stroke-width: 14px; vector-effect: non-scaling-stroke; }
.beige { fill: #d3cfc9; }
.purple { fill: #b0a8c8; }
.road polyline { fill: none; stroke: #dcdde0; stroke-width: 3.500px; vector-effect: non-scaling-stroke; stroke-linejoin: round; }
.a-roads polyline { fill: none; stroke-linejoin: round; }
.a-roads { stroke: #e4cd90; stroke-width: 5.500px; }
.a-roads-core { stroke: #e0dac6; stroke-width: 2.500px; }
.borough { fill: #e9eaee; stroke: #777; stroke-width: 2.500px; stroke-linejoin: round; }
.heath polygon { fill: #a6d9b2; }
.road-w polyline { fill: none; stroke: #fff; stroke-width: 3.500px; vector-effect: non-scaling-stroke; }
.road-y { fill: none; stroke: #fbcf6a; stroke-width: 5px; vector-effect: non-scaling-stroke; }
.cluster { fill: url(#cluster); }
.shield rect { fill: #8ba872; }
.shield text { fill: #e2cb42; font-size: 24px; font-weight: 500; text-anchor: middle; }
.shield-lit rect { fill: #6ba33c; }
.shield-lit text { fill: #f6e300; }
.place text, .area text, .district text, .london { paint-order: stroke; stroke: rgba(214,215,218,.8); stroke-width: 3px; stroke-linejoin: round; }
.place text { fill: #666; font-size: 30px; }
.area text { fill: #6b6b6b; font-size: 22px; font-weight: 500; letter-spacing: 2.600px; }
.district text { fill: #585858; font-size: 28px; font-weight: 500; letter-spacing: 4.200px; }
.london { fill: #555; font-size: 64px; font-weight: 500; }
.river-name { fill: #5f80bf; font-size: 24px; letter-spacing: .6px; }
.park { fill: #3d9060; font-size: 33px; }
.park-end { text-anchor: end; }
.google { font-family: "Liberation Sans", sans-serif; font-size: 42px; letter-spacing: 1px; }
.g-b { fill: #6e9be0; }
.g-r { fill: #d87770; }
.g-y { fill: #e0ba50; }
.g-g { fill: #58aa70; }
.scale-line { fill: none; stroke: #000; stroke-width: 5px; }
.scale-text { fill: #000; font-family: "Open Sans", sans-serif; font-size: 22px; }
.cluster-count { fill: #000; font-family: "Open Sans", sans-serif; font-size: 25px; text-anchor: middle; }

.zoom-ctl { position: absolute; left: 35px; top: 34px; width: 43px; display: flex; flex-direction: column; gap: 5px; }
.zoom-btn { height: 43px; background: rgba(247,247,247,.96); display: flex; align-items: center; justify-content: center; box-sizing: border-box; }
.zoom-btn:first-child { border-radius: 22px 22px 0 0; }
.zoom-btn:last-child { border-radius: 0 0 22px 22px; }
.zoom-in { padding-top: 8px; }
.zoom-plus, .zoom-minus { width: 24px; height: 8px; background: #a9a9a9; display: block; }
.zoom-plus { position: relative; }
.zoom-plus::after { content: ""; position: absolute; left: 8px; top: -8px; width: 8px; height: 24px; background: #a9a9a9; }
.map-tool { position: absolute; left: 115px; top: 27px; width: 67px; height: 71px; background: #fff; border: 1px solid #ccc; box-sizing: border-box; border-radius: 19px; box-shadow: 3px 4px 3px rgba(80,80,80,.7); }
.map-tool svg { display: block; width: 100%; height: 100%; fill: #6b8fd6; }
.attribution { position: absolute; right: 0; bottom: 0; left: 1759px; height: 35px; padding: 5px 0 0 15px; background: rgba(255,255,255,.2); display: flex; align-items: center; box-sizing: border-box; font-family: "Open Sans", sans-serif; font-size: 25px; color: #444; white-space: nowrap; }
.attr-sep { width: 1px; height: 35px; background: rgba(120,150,210,.3); margin: -5px 15px 0; }
.attr-report { font-size: 24px; letter-spacing: -.4px; }
```
